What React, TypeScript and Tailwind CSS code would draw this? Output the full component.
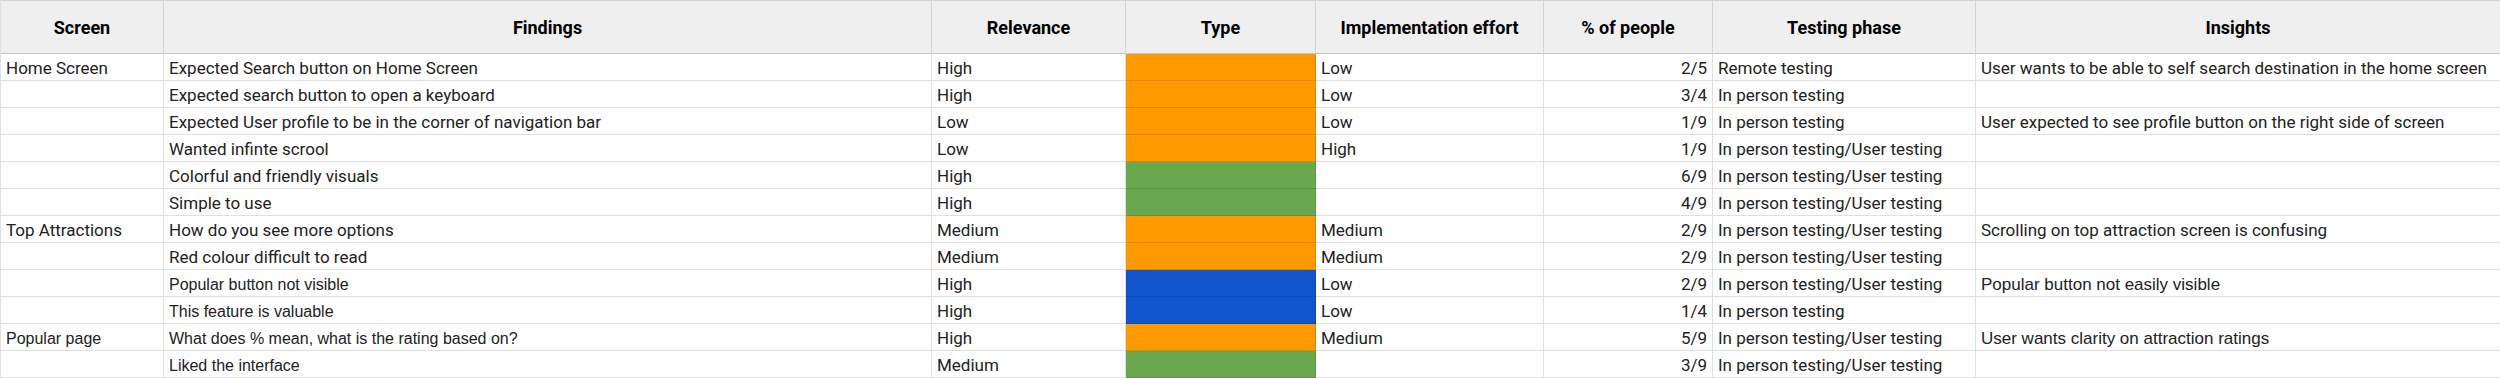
import React from "react";

type Row = {
  screen: string;
  finding: string;
  relevance: string;
  type: "orange" | "green" | "blue";
  effort: string;
  pct: string;
  phase: string;
  insight: string;
  arial?: boolean;
  arialInsight?: boolean;
};

const rows: Row[] = [
  { screen: "Home Screen", finding: "Expected Search button on Home Screen", relevance: "High", type: "orange", effort: "Low", pct: "2/5", phase: "Remote testing", insight: "User wants to be able to self search destination in the home screen" },
  { screen: "", finding: "Expected search button to open a keyboard", relevance: "High", type: "orange", effort: "Low", pct: "3/4", phase: "In person testing", insight: "" },
  { screen: "", finding: "Expected User profile to be in the corner of navigation bar", relevance: "Low", type: "orange", effort: "Low", pct: "1/9", phase: "In person testing", insight: "User expected to see profile button on the right side of screen" },
  { screen: "", finding: "Wanted infinte scrool", relevance: "Low", type: "orange", effort: "High", pct: "1/9", phase: "In person testing/User testing", insight: "" },
  { screen: "", finding: "Colorful and friendly visuals", relevance: "High", type: "green", effort: "", pct: "6/9", phase: "In person testing/User testing", insight: "" },
  { screen: "", finding: "Simple to use", relevance: "High", type: "green", effort: "", pct: "4/9", phase: "In person testing/User testing", insight: "" },
  { screen: "Top Attractions", finding: "How do you see more options", relevance: "Medium", type: "orange", effort: "Medium", pct: "2/9", phase: "In person testing/User testing", insight: "Scrolling on top attraction screen is confusing" },
  { screen: "", finding: "Red colour difficult to read", relevance: "Medium", type: "orange", effort: "Medium", pct: "2/9", phase: "In person testing/User testing", insight: "" },
  { screen: "", finding: "Popular button not visible", relevance: "High", type: "blue", effort: "Low", pct: "2/9", phase: "In person testing/User testing", insight: "Popular button not easily visible", arial: true, arialInsight: true },
  { screen: "", finding: "This feature is valuable", relevance: "High", type: "blue", effort: "Low", pct: "1/4", phase: "In person testing", insight: "", arial: true },
  { screen: "Popular page", finding: "What does % mean, what is the rating based on?", relevance: "High", type: "orange", effort: "Medium", pct: "5/9", phase: "In person testing/User testing", insight: "User wants clarity on attraction ratings", arial: true, arialInsight: true },
  { screen: "", finding: "Liked the interface", relevance: "Medium", type: "green", effort: "", pct: "3/9", phase: "In person testing/User testing", insight: "", arial: true },
];

const headers = [
  "Screen",
  "Findings",
  "Relevance",
  "Type",
  "Implementation effort",
  "% of people",
  "Testing phase",
  "Insights",
];

const roboto = "font-['Roboto',sans-serif] text-[17px]";
const arial = "font-['Liberation_Sans',Arial,sans-serif] text-[16px]";
const arialLg = "font-['Liberation_Sans',Arial,sans-serif] text-[17px]";

function Cell({
  children,
  font,
  right,
  bg,
}: {
  children?: React.ReactNode;
  font: string;
  right?: boolean;
  bg?: string;
}) {
  return (
    <div
      className={`h-[27px] border-r border-b border-black/[0.12] pt-[3px] px-[5px] leading-[23px] text-[#222222] whitespace-nowrap overflow-hidden ${font} ${
        right ? "text-right" : "text-left"
      } ${bg ?? "bg-white"}`}
    >
      {children}
    </div>
  );
}

const typeBg: Record<Row["type"], string> = {
  orange: "bg-[#ff9900]",
  green: "bg-[#6aa84f]",
  blue: "bg-[#1155cc]",
};

export default function App() {
  return (
    <div className="w-[2500px] h-[378px] bg-white overflow-hidden">
      <div className="grid grid-cols-[163px_768px_194px_190px_228px_169px_263px_525px] border-l border-black/[0.12]">
        {headers.map((h) => (
          <div
            key={h}
            className="h-[54px] flex items-center justify-center bg-[#efefef] border-t border-r border-b border-t-[#d4d4d4] border-r-[#d4d4d4] border-b-[#c6c6c6] text-[18px] font-bold text-black font-['Roboto',sans-serif]"
          >
            {h}
          </div>
        ))}
        {rows.map((r, i) => {
          const f = r.arial ? arial : roboto;
          return (
            <React.Fragment key={i}>
              <Cell font={f}>{r.screen}</Cell>
              <Cell font={f}>{r.finding}</Cell>
              <Cell font={roboto}>{r.relevance}</Cell>
              <Cell font={roboto} bg={typeBg[r.type]} />
              <Cell font={roboto}>{r.effort}</Cell>
              <Cell font={roboto} right>
                {r.pct}
              </Cell>
              <Cell font={roboto}>{r.phase}</Cell>
              <Cell font={r.arialInsight ? arialLg : roboto}>{r.insight}</Cell>
            </React.Fragment>
          );
        })}
      </div>
    </div>
  );
}
